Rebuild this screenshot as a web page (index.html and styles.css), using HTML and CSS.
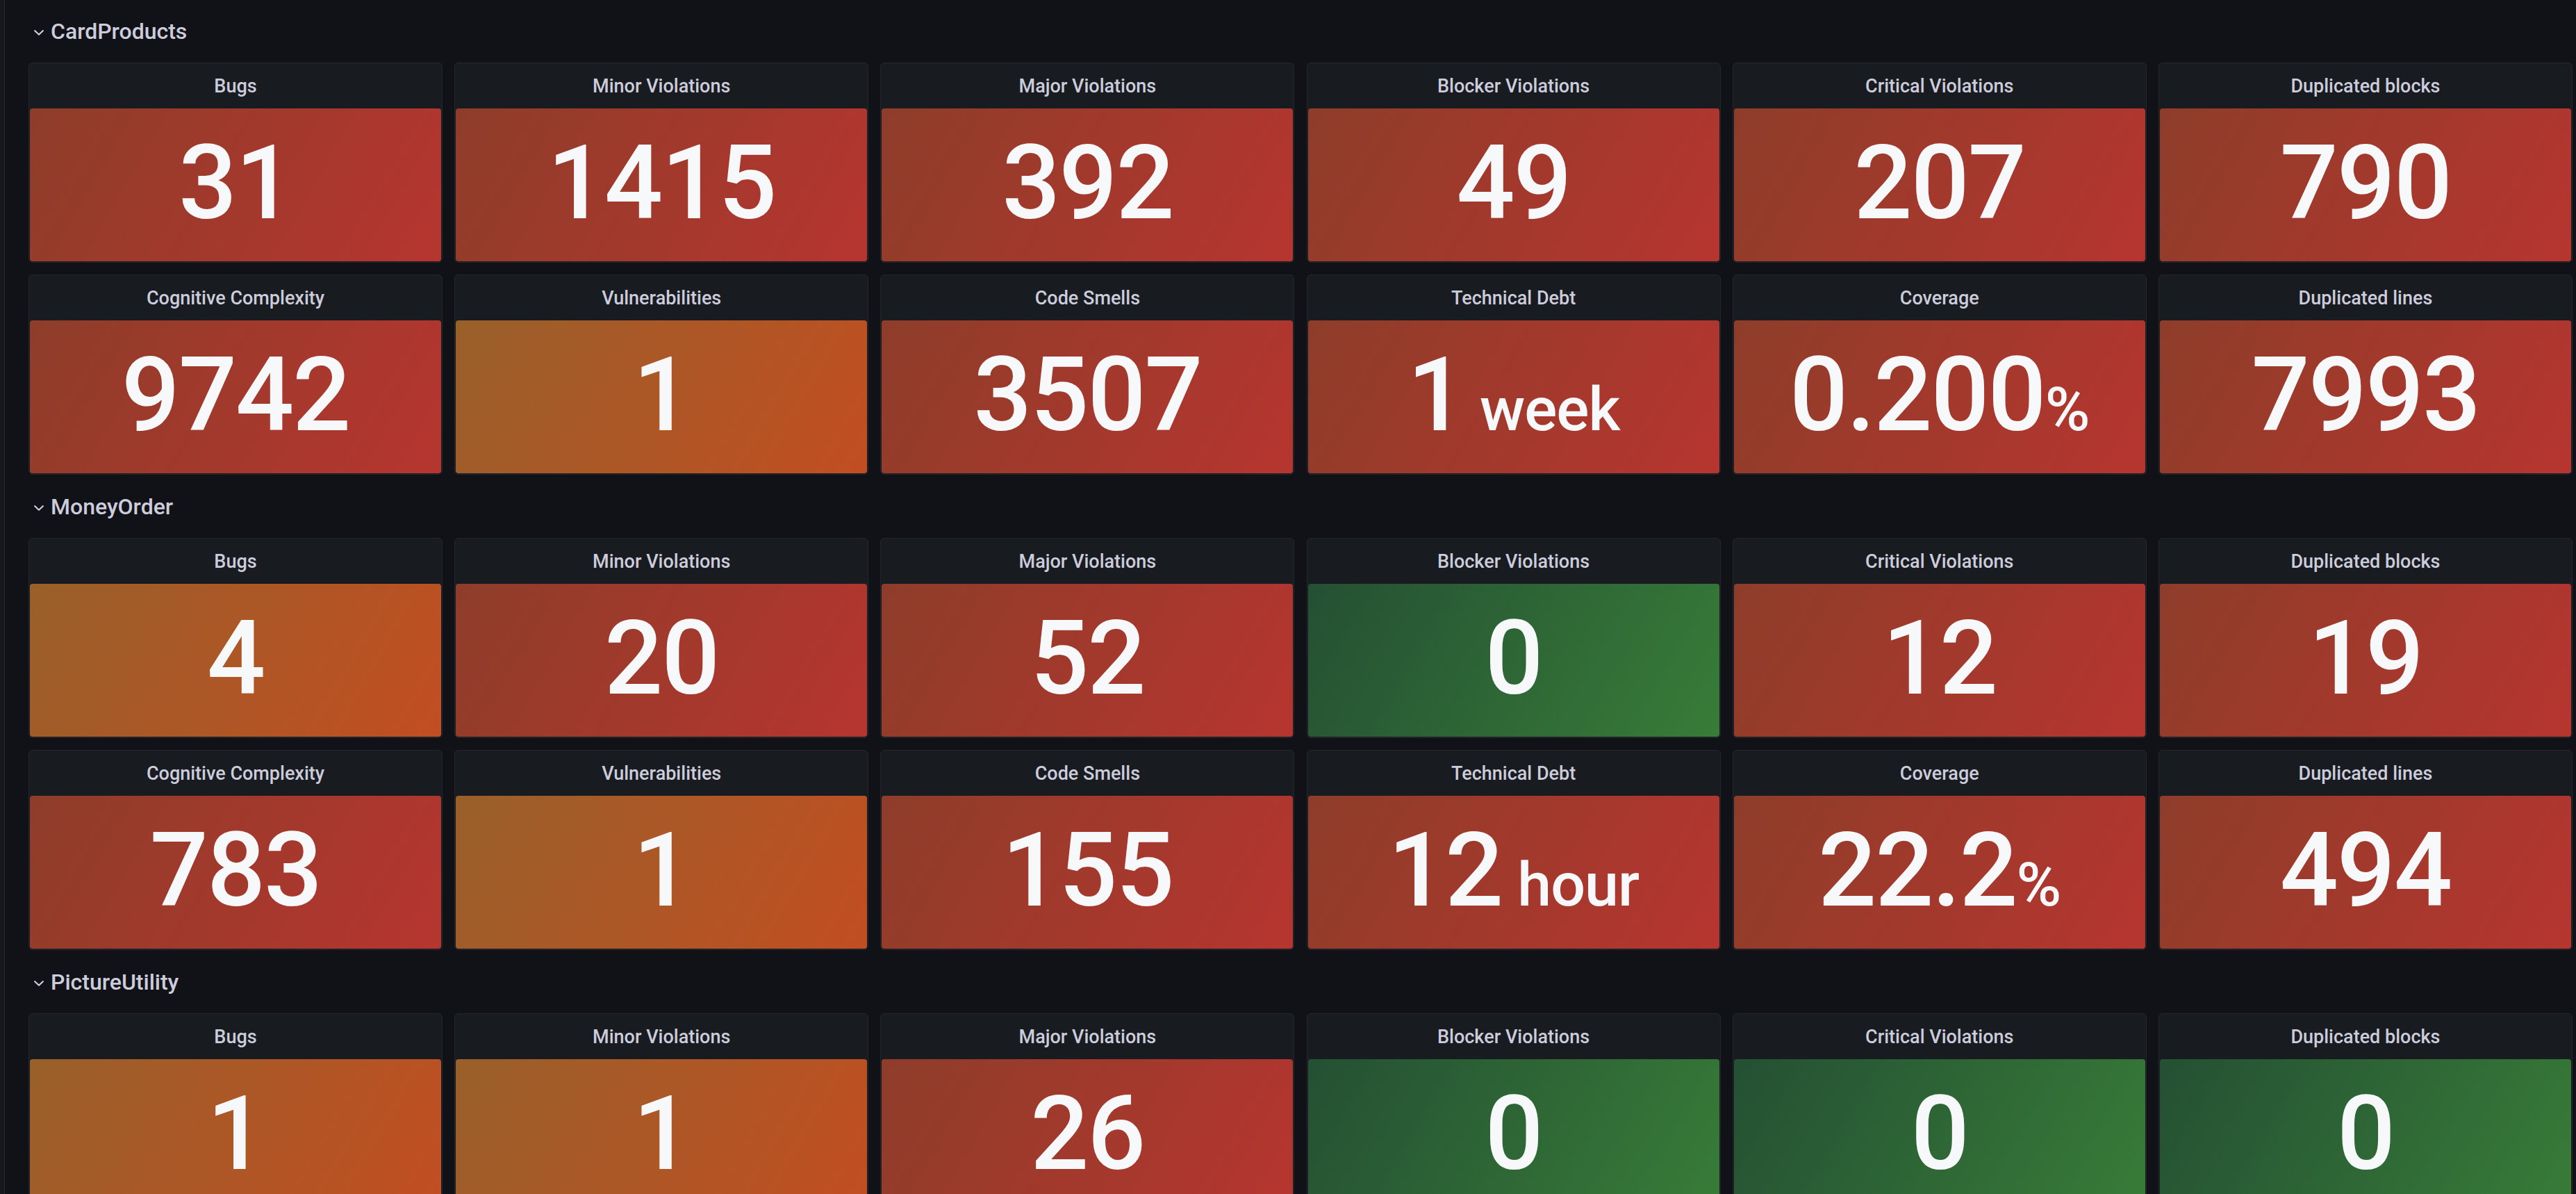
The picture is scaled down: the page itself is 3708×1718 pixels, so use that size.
FILE: index.html
```html
<!DOCTYPE html>
<html lang="en">
<head>
<meta charset="utf-8">
<title>SonarQube Dashboard</title>
<link rel="stylesheet" href="styles.css">
</head>
<body>
<div class="app">
  <div class="sidebar"></div>
  <main class="dashboard">

    <div class="row-header">
      <svg class="chevron" viewBox="0 0 14 8" width="14" height="8"><path d="M1.2 1.2 L7 6.8 L12.8 1.2"/></svg>
      <span class="row-title">CardProducts</span>
    </div>
    <div class="panel-grid">
      <div class="panel"><div class="panel-header">Bugs</div><div class="panel-body red"><span class="value">31</span></div></div>
      <div class="panel"><div class="panel-header">Minor Violations</div><div class="panel-body red"><span class="value">1415</span></div></div>
      <div class="panel"><div class="panel-header">Major Violations</div><div class="panel-body red"><span class="value">392</span></div></div>
      <div class="panel"><div class="panel-header">Blocker Violations</div><div class="panel-body red"><span class="value">49</span></div></div>
      <div class="panel"><div class="panel-header">Critical Violations</div><div class="panel-body red"><span class="value">207</span></div></div>
      <div class="panel"><div class="panel-header">Duplicated blocks</div><div class="panel-body red"><span class="value">790</span></div></div>
      <div class="panel"><div class="panel-header">Cognitive Complexity</div><div class="panel-body red"><span class="value">9742</span></div></div>
      <div class="panel"><div class="panel-header">Vulnerabilities</div><div class="panel-body orange"><span class="value">1</span></div></div>
      <div class="panel"><div class="panel-header">Code Smells</div><div class="panel-body red"><span class="value">3507</span></div></div>
      <div class="panel"><div class="panel-header">Technical Debt</div><div class="panel-body red"><span class="value">1<span class="unit spaced">week</span></span></div></div>
      <div class="panel"><div class="panel-header">Coverage</div><div class="panel-body red"><span class="value">0.200<span class="unit">%</span></span></div></div>
      <div class="panel"><div class="panel-header">Duplicated lines</div><div class="panel-body red"><span class="value">7993</span></div></div>
    </div>

    <div class="row-header">
      <svg class="chevron" viewBox="0 0 14 8" width="14" height="8"><path d="M1.2 1.2 L7 6.8 L12.8 1.2"/></svg>
      <span class="row-title">MoneyOrder</span>
    </div>
    <div class="panel-grid">
      <div class="panel"><div class="panel-header">Bugs</div><div class="panel-body orange"><span class="value">4</span></div></div>
      <div class="panel"><div class="panel-header">Minor Violations</div><div class="panel-body red"><span class="value">20</span></div></div>
      <div class="panel"><div class="panel-header">Major Violations</div><div class="panel-body red"><span class="value">52</span></div></div>
      <div class="panel"><div class="panel-header">Blocker Violations</div><div class="panel-body green"><span class="value">0</span></div></div>
      <div class="panel"><div class="panel-header">Critical Violations</div><div class="panel-body red"><span class="value">12</span></div></div>
      <div class="panel"><div class="panel-header">Duplicated blocks</div><div class="panel-body red"><span class="value">19</span></div></div>
      <div class="panel"><div class="panel-header">Cognitive Complexity</div><div class="panel-body red"><span class="value">783</span></div></div>
      <div class="panel"><div class="panel-header">Vulnerabilities</div><div class="panel-body orange"><span class="value">1</span></div></div>
      <div class="panel"><div class="panel-header">Code Smells</div><div class="panel-body red"><span class="value">155</span></div></div>
      <div class="panel"><div class="panel-header">Technical Debt</div><div class="panel-body red"><span class="value">12<span class="unit spaced">hour</span></span></div></div>
      <div class="panel"><div class="panel-header">Coverage</div><div class="panel-body red"><span class="value">22.2<span class="unit">%</span></span></div></div>
      <div class="panel"><div class="panel-header">Duplicated lines</div><div class="panel-body red"><span class="value">494</span></div></div>
    </div>

    <div class="row-header">
      <svg class="chevron" viewBox="0 0 14 8" width="14" height="8"><path d="M1.2 1.2 L7 6.8 L12.8 1.2"/></svg>
      <span class="row-title">PictureUtility</span>
    </div>
    <div class="panel-grid">
      <div class="panel"><div class="panel-header">Bugs</div><div class="panel-body orange"><span class="value">1</span></div></div>
      <div class="panel"><div class="panel-header">Minor Violations</div><div class="panel-body orange"><span class="value">1</span></div></div>
      <div class="panel"><div class="panel-header">Major Violations</div><div class="panel-body red"><span class="value">26</span></div></div>
      <div class="panel"><div class="panel-header">Blocker Violations</div><div class="panel-body green"><span class="value">0</span></div></div>
      <div class="panel"><div class="panel-header">Critical Violations</div><div class="panel-body green"><span class="value">0</span></div></div>
      <div class="panel"><div class="panel-header">Duplicated blocks</div><div class="panel-body green"><span class="value">0</span></div></div>
    </div>

  </main>
</div>
</body>
</html>
```
FILE: styles.css
```css
html, body {
  margin: 0;
  padding: 0;
  height: 100%;
  overflow: hidden;
  background: #111217;
  font-family: "Roboto", "Inter", "Liberation Sans", sans-serif;
  color: #ccccdc;
}

.app {
  display: flex;
  min-height: 100%;
}

.sidebar {
  width: 6px;
  flex: 0 0 6px;
  background: #16181c;
  border-right: 1px solid #25272c;
}

.dashboard {
  flex: 1;
  display: flex;
  flex-direction: column;
  gap: 17px;
  padding: 16px 0 0 34px;
}

.row-header {
  height: 57px;
  display: flex;
  align-items: center;
  gap: 10px;
  padding-left: 8px;
}

.chevron {
  flex: 0 0 auto;
  margin-top: 5px;
}

.chevron path {
  fill: none;
  stroke: #ccccdc;
  stroke-width: 2.2;
  stroke-linecap: round;
  stroke-linejoin: round;
}

.row-title {
  font-size: 32px;
  font-weight: 500;
  line-height: 1;
  color: #ccccdc;
}

.panel-grid {
  display: grid;
  grid-template-columns: repeat(6, 596px);
  grid-auto-rows: 288px;
  column-gap: 17.2px;
  row-gap: 17px;
}

.panel {
  box-sizing: border-box;
  background: #181b1f;
  border: 1px solid #24272c;
  border-radius: 6px;
  display: flex;
  flex-direction: column;
  overflow: hidden;
}

.panel-header {
  height: 65px;
  flex: 0 0 65px;
  display: flex;
  align-items: center;
  justify-content: center;
  font-size: 27px;
  font-weight: 500;
  color: #ccccdc;
  white-space: nowrap;
}

.panel-body {
  flex: 1;
  margin: 0 1px 1px;
  border-radius: 4px;
  display: flex;
  align-items: center;
  justify-content: center;
  padding-bottom: 4px;
  box-sizing: border-box;
}

.red {
  background: linear-gradient(120deg, #8e3d2a, #b6352f);
}

.orange {
  background: linear-gradient(120deg, #99602a, #c24e22);
}

.green {
  background: linear-gradient(120deg, #245033, #387c38);
}

.value {
  font-size: 148px;
  font-weight: 500;
  line-height: 1;
  letter-spacing: -2px;
  color: #f7f8fa;
  white-space: nowrap;
}

.unit {
  font-size: 88px;
  letter-spacing: -1px;
}

.unit.spaced {
  margin-left: 22px;
}
```
